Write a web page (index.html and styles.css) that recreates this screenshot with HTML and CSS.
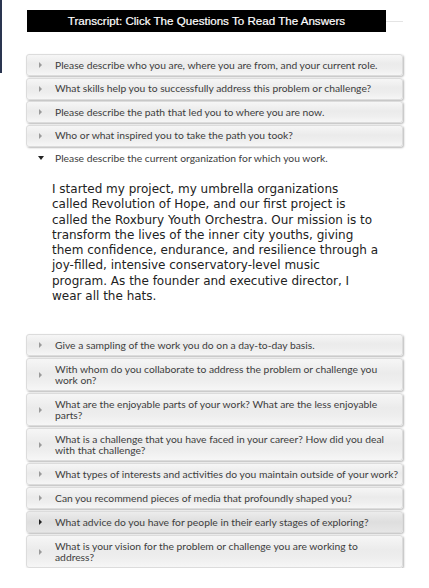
FILE: index.html
```html
<!DOCTYPE html>
<html>
<head>
<meta charset="utf-8">
<link rel="stylesheet" href="styles.css">
</head>
<body>
<div class="edge"></div>
<div class="page">
  <div class="title-row">
    <div class="title">Transcript: Click The Questions To Read The Answers</div>
    <div class="title-line"></div>
  </div>
  <div class="group first">
    <div class="q"><span class="arrow"></span><span class="qt">Please describe who you are, where you are from, and your current role.</span></div>
    <div class="q"><span class="arrow"></span><span class="qt">What skills help you to successfully address this problem or challenge?</span></div>
    <div class="q"><span class="arrow"></span><span class="qt">Please describe the path that led you to where you are now.</span></div>
    <div class="q"><span class="arrow"></span><span class="qt">Who or what inspired you to take the path you took?</span></div>
    <div class="q open"><span class="arrow down"></span><span class="qt">Please describe the current organization for which you work.</span></div>
  </div>
  <p class="answer">I started my project, my umbrella organizations<br>called Revolution of Hope, and our first project is<br>called the Roxbury Youth Orchestra. Our mission is to<br>transform the lives of the inner city youths, giving<br>them confidence, endurance, and resilience through a<br>joy-filled, intensive conservatory-level music<br>program. As the founder and executive director, I<br>wear all the hats.</p>
  <div class="group second">
    <div class="q"><span class="arrow"></span><span class="qt">Give a sampling of the work you do on a day-to-day basis.</span></div>
    <div class="q"><span class="arrow"></span><span class="qt">With whom do you collaborate to address the problem or challenge you<br>work on?</span></div>
    <div class="q"><span class="arrow"></span><span class="qt">What are the enjoyable parts of your work? What are the less enjoyable<br>parts?</span></div>
    <div class="q"><span class="arrow"></span><span class="qt">What is a challenge that you have faced in your career? How did you deal<br>with that challenge?</span></div>
    <div class="q"><span class="arrow"></span><span class="qt nowrap">What types of interests and activities do you maintain outside of your work?</span></div>
    <div class="q"><span class="arrow"></span><span class="qt">Can you recommend pieces of media that profoundly shaped you?</span></div>
    <div class="q hover"><span class="arrow"></span><span class="qt">What advice do you have for people in their early stages of exploring?</span></div>
    <div class="q"><span class="arrow"></span><span class="qt">What is your vision for the problem or challenge you are working to<br>address?</span></div>
  </div>
</div>
</body>
</html>
```
FILE: styles.css
```css
html, body {
  margin: 0;
  padding: 0;
  background: #ffffff;
}
.edge {
  position: absolute;
  left: 0;
  top: 0;
  width: 2px;
  height: 73px;
  background: #2a3550;
}
.page {
  padding: 10px 0 0 26px;
  width: 377px;
}
.title-row {
  display: flex;
  align-items: center;
  padding-left: 1px;
}
.title {
  width: 359px;
  height: 22px;
  background: #000;
  color: #fff;
  font-family: "Liberation Sans", Arial, sans-serif;
  font-size: 11.6px;
  line-height: 22px;
  text-align: center;
  -webkit-text-stroke: 0.2px #fff;
}
.title-line {
  flex: 1;
  height: 1px;
  background: #e4e4e4;
}
.group {
  display: flex;
  flex-direction: column;
  gap: 1.5px;
}
.group.first {
  margin-top: 22px;
}
.group.second {
  gap: 2px;
}
.q {
  display: flex;
  align-items: center;
  box-sizing: border-box;
  min-height: 22px;
  padding: 4.5px 2px 4.5px 11px;
  border: 1px solid #dcdcdc;
  border-radius: 3px;
  background: linear-gradient(to bottom, #f6f6f6 0%, #ebebeb 45%, #eeeeee 70%, #f6f6f6 100%);
  box-shadow: 1px 1px 2px rgba(0, 0, 0, 0.28);
  font-family: Lato, "Open Sans", sans-serif;
  font-size: 10.3px;
  line-height: 11px;
  color: #3d3d3d;
}
.q.open {
  background: none;
  border-color: transparent;
  box-shadow: none;
  margin-top: -1px;
}
.q.hover {
  background: linear-gradient(to bottom, #ececec 0%, #dedede 50%, #e6e6e6 100%);
}
.arrow {
  flex: none;
  width: 0;
  height: 0;
  border-top: 3px solid transparent;
  border-bottom: 3px solid transparent;
  border-left: 3.5px solid #9a9a9a;
  margin-right: 13.5px;
  margin-left: 0.5px;
}
.q.hover .arrow {
  border-left-color: #222;
}
.arrow.down {
  border-left: 3px solid transparent;
  border-right: 3px solid transparent;
  border-top: 4px solid #222;
  border-bottom: 0;
  margin-left: 0;
  margin-right: 11px;
}
.qt {
  flex: 1;
}
.nowrap {
  white-space: nowrap;
}
.answer {
  margin: 13px 0 30px 26px;
  font-family: "DejaVu Sans", Verdana, sans-serif;
  font-size: 12px;
  line-height: 15.3px;
  color: #222;
  white-space: nowrap;
}
```
